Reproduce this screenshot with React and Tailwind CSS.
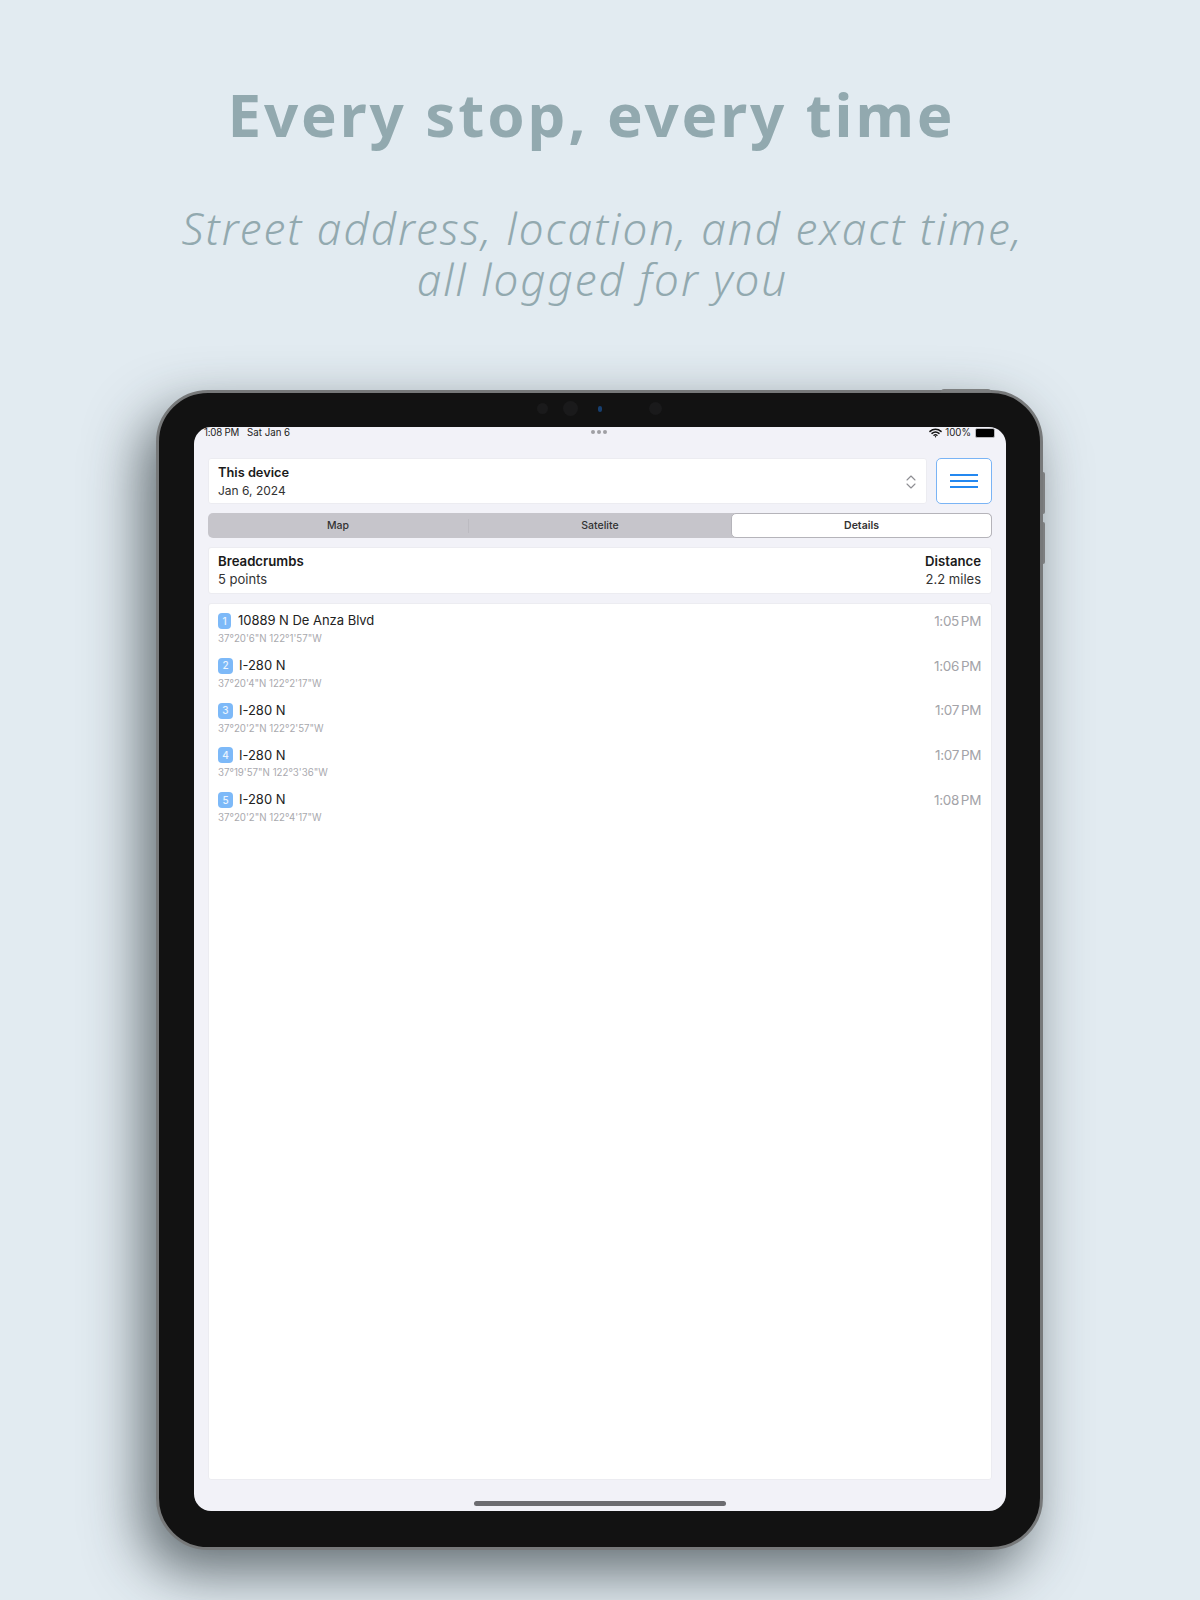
import React from 'react'

const points = [
  { id: 1, name: '10889 N De Anza Blvd', coords: '37°20\'6"N 122°1\'57"W', time: '1:05 PM' },
  { id: 2, name: 'I-280 N', coords: '37°20\'4"N 122°2\'17"W', time: '1:06 PM' },
  { id: 3, name: 'I-280 N', coords: '37°20\'2"N 122°2\'57"W', time: '1:07 PM' },
  { id: 4, name: 'I-280 N', coords: '37°19\'57"N 122°3\'36"W', time: '1:07 PM' },
  { id: 5, name: 'I-280 N', coords: '37°20\'2"N 122°4\'17"W', time: '1:08 PM' },
]

const Wifi = () => (
  <svg width="13" height="10" viewBox="0 0 13 10" fill="none" stroke="#111" strokeLinecap="round">
    <path d="M1 3.4C4.2.6 8.8.6 12 3.4" strokeWidth="1.5" />
    <path d="M3 5.4c2.1-1.7 4.9-1.7 7 0" strokeWidth="1.5" />
    <path d="M5 7.3c.9-.7 2.1-.7 3 0" strokeWidth="1.4" />
    <circle cx="6.5" cy="8.7" r=".7" fill="#111" stroke="none" />
  </svg>
)

const UpDown = () => (
  <svg width="10" height="14" viewBox="0 0 10 14" fill="none" stroke="#8e8e93" strokeWidth="1.1" strokeLinecap="round" strokeLinejoin="round">
    <path d="M1 5l4-4 4 4" />
    <path d="M1 9l4 4 4-4" />
  </svg>
)

const Row = ({ point }) => (
  <div className="h-[44.8px]">
    <div className="flex items-center justify-between h-[18px]">
      <div className={`flex items-center ${point.id === 1 ? 'gap-[7px]' : 'gap-[6px]'}`}>
        <span className={`flex items-center justify-center h-4 rounded-[4px] bg-[#7db9f8] text-white/85 text-[10px] font-medium ${point.id === 1 ? 'w-[13px]' : 'w-[15px]'}`}>
          {point.id}
        </span>
        <span className="text-[13px] tracking-[-0.03px] text-[#222222]">{point.name}</span>
      </div>
      <span className="text-[13.5px] text-[#a3a3a8] tracking-[-0.35px] [word-spacing:-1.5px]">{point.time}</span>
    </div>
    <p className="mt-[3px] text-[9.7px] leading-3 text-[#a9a9ae]">{point.coords}</p>
  </div>
)

const App = () => {
  return (
    <div className="w-[1200px] h-[1600px] overflow-hidden bg-[#e2ebf1] flex flex-col items-center font-['Inter',sans-serif]">
      <h1 className="mt-[69px] mr-[17px] font-['Noto_Sans',sans-serif] text-[60px] leading-[90px] font-bold tracking-[2.9px] text-[#92a9af]">
        Every stop, every time
      </h1>
      <p className="mt-[44px] ml-[5px] font-['Noto_Sans',sans-serif] font-light italic text-[44px] leading-[51px] tracking-[2px] text-center text-[#92a9af]">
        Street address, location, and exact time,
        <br />
        all logged for you
      </p>

      {/* Device */}
      <div className="relative mt-[85px] -ml-px w-[887px] h-[1160px] shrink-0 rounded-[52px] bg-[#121212] border-[3px] border-[#77797a] pl-[35px] pr-[34px] pt-[34px] pb-[36px] shadow-[-14px_22px_55px_rgba(40,50,55,0.68)]">
        <div className="absolute -top-[4px] left-[782px] w-[50px] h-[3px] rounded-t-sm bg-[#7d7f80]"></div>
        <div className="absolute top-[79px] -right-[5px] w-[2px] h-[42px] rounded-r-sm bg-[#7d7f80]"></div>
        <div className="absolute top-[129px] -right-[5px] w-[2px] h-[42px] rounded-r-sm bg-[#7d7f80]"></div>

        {/* Cameras */}
        <div className="absolute top-[10px] left-[378px] w-[11px] h-[11px] rounded-full bg-[#1a1a1b]"></div>
        <div className="absolute top-[8px] left-[404px] w-[15px] h-[15px] rounded-full bg-[#1a1a1b]"></div>
        <div className="absolute top-[13px] left-[439px] w-[4px] h-[6px] rounded-full bg-[#173f70]"></div>
        <div className="absolute top-[9px] left-[490px] w-[13px] h-[13px] rounded-full bg-[#1a1a1b]"></div>

        {/* Screen */}
        <div className="relative flex flex-col h-full rounded-[17px] overflow-hidden bg-[#f2f2f8]">
          <div className="flex items-center justify-between h-[12px] pl-[10px] pr-[11px] text-[9.7px] text-[#222222]">
            <div className="flex gap-[8px]">
              <span className="tracking-[-0.2px]">1:08 PM</span>
              <span>Sat Jan 6</span>
            </div>
            <div className="flex items-center gap-[3px]">
              <Wifi />
              <span>100%</span>
              <div className="ml-[1px] w-[20px] h-[10px] rounded-[2px] bg-black border border-[#b8b8bc]"></div>
            </div>
          </div>
          <div className="absolute top-[3px] left-[397px] flex gap-[2px]">
            <span className="w-[4px] h-[4px] rounded-full bg-[#a0a0a4]"></span>
            <span className="w-[4px] h-[4px] rounded-full bg-[#a0a0a4]"></span>
            <span className="w-[4px] h-[4px] rounded-full bg-[#a0a0a4]"></span>
          </div>

          <div className="flex flex-col flex-1 px-[14px] pt-[19px] pb-[31px]">
            <div className="flex gap-[9px] h-[46px]">
              <div className="flex-1 flex items-center justify-between rounded-[3px] bg-white border border-[#ececf1] pl-[9px] pr-[10px] pt-[1px]">
                <div>
                  <p className="text-[12.8px] leading-[18px] font-semibold text-[#1a1a1a]">This device</p>
                  <p className="text-[12px] leading-[18px] text-[#333333]">Jan 6, 2024</p>
                </div>
                <UpDown />
              </div>
              <button className="w-[56px] flex items-center justify-center rounded-[5px] bg-white border-[1.5px] border-[#7ab4f5]">
                <div className="flex flex-col gap-[4px] w-[28px]">
                  <span className="h-[2px] bg-[#2488f0]"></span>
                  <span className="h-[2px] bg-[#2488f0]"></span>
                  <span className="h-[2px] bg-[#2488f0]"></span>
                </div>
              </button>
            </div>

            <div className="flex mt-[9px] h-[25px] rounded-[5px] bg-[#c6c5cb] text-[10.5px] font-medium text-[#333333]">
              <div className="w-[260px] flex items-center justify-center">Map</div>
              <div className="w-[1px] h-[14px] self-center bg-[#bcbbc1]"></div>
              <div className="w-[262px] flex items-center justify-center">Satelite</div>
              <div className="flex-1 flex items-center justify-center rounded-[5px] bg-white border-[1.5px] border-[#b5b4ba] font-semibold">Details</div>
            </div>

            <div className="flex justify-between items-center mt-[9px] h-[47px] rounded-[3px] bg-white border border-[#ececf1] pl-[9px] pr-[10px] pb-[2px]">
              <div>
                <p className="text-[13.2px] leading-[18px] font-semibold text-[#1a1a1a]">Breadcrumbs</p>
                <p className="text-[13px] leading-[18px] text-[#333333]">5 points</p>
              </div>
              <div className="text-right">
                <p className="text-[13.2px] leading-[18px] font-semibold text-[#1a1a1a]">Distance</p>
                <p className="text-[13px] leading-[18px] text-[#333333]">2.2 miles</p>
              </div>
            </div>

            <div className="flex-1 mt-[9px] rounded-[3px] bg-white border border-[#ececf1] pl-[9px] pr-[10px] pt-[8px]">
              {points.map((point) => (
                <Row key={point.id} point={point} />
              ))}
            </div>
          </div>

          <div className="absolute bottom-[5px] left-[280px] w-[252px] h-[5px] rounded-full bg-[#6c6c70]"></div>
        </div>
      </div>
    </div>
  )
}

export default App
